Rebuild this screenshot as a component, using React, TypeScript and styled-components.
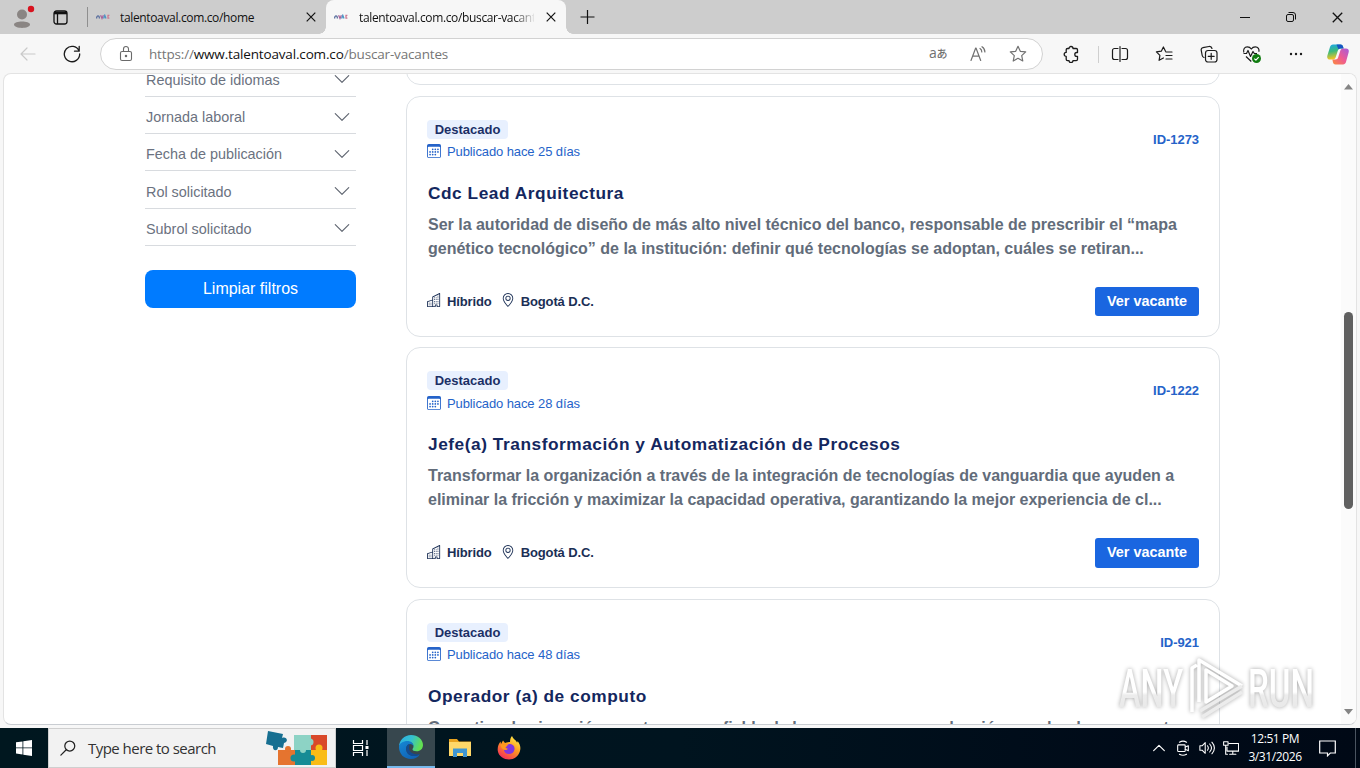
import React from "react";
import styled, { createGlobalStyle } from "styled-components";
import { BsBuildings, BsCalendar3, BsChevronDown, BsGeoAlt } from "react-icons/bs";

const GlobalStyle = createGlobalStyle`
  * {
    box-sizing: border-box;
  }
  body {
    margin: 0;
    overflow: hidden;
    font-family: "Liberation Sans", Arial, sans-serif;
  }
`;

const Desktop = styled.div`
  display: flex;
  flex-direction: column;
  width: 1360px;
  height: 768px;
  background: #f7f7f7;
  overflow: hidden;
`;

const TabBar = styled.div`
  display: flex;
  align-items: center;
  height: 34px;
  background: #cdcdcd;
  font-family: "Open Sans", sans-serif;
  font-size: 12px;
  color: #111;
  svg {
    display: block;
    flex: none;
  }
  .profile {
    margin-left: 12px;
  }
  .workspaces {
    margin-left: 18px;
  }
  .divider {
    width: 1px;
    height: 20px;
    margin-left: 19px;
    background: #8f8f8f;
  }
`;

const Tab = styled.div<{ $active?: boolean; $width: number }>`
  position: relative;
  display: flex;
  align-items: center;
  width: ${(p) => p.$width}px;
  height: 34px;
  padding: 0 10px 0 8px;
  border-radius: 8px 8px 0 0;
  background: ${(p) => (p.$active ? "#f7f7f7" : "transparent")};
  &::before,
  &::after {
    content: "";
    display: ${(p) => (p.$active ? "block" : "none")};
    position: absolute;
    bottom: 0;
    width: 7px;
    height: 7px;
  }
  &::before {
    left: -7px;
    background: radial-gradient(circle at 0 0, #cdcdcd 6.5px, #f7f7f7 7px);
  }
  &::after {
    right: -7px;
    background: radial-gradient(circle at 100% 0, #cdcdcd 6.5px, #f7f7f7 7px);
  }
`;

const TabTitle = styled.span<{ $fade?: boolean }>`
  flex: 1;
  margin-left: 10px;
  margin-right: 14px;
  overflow: hidden;
  white-space: nowrap;
  letter-spacing: -0.35px;
  ${(p) =>
    p.$fade &&
    "mask-image: linear-gradient(90deg, #000 88%, transparent 101%); margin-left: 11px; margin-right: 12px;"}
`;

const WindowButtons = styled.div`
  display: flex;
  margin-left: auto;
  div {
    display: flex;
    justify-content: center;
    width: 46px;
  }
`;

const Toolbar = styled.div`
  display: flex;
  align-items: center;
  height: 40px;
  padding-left: 6px;
  svg {
    display: block;
  }
`;

const ToolButton = styled.div<{ $width?: number }>`
  display: flex;
  justify-content: center;
  width: ${(p) => p.$width || 44}px;
`;

const Omnibox = styled.div`
  display: flex;
  align-items: center;
  width: 943px;
  height: 32px;
  margin: 0 6px;
  padding: 0 4px 0 17px;
  border: 1px solid #d2d2d2;
  border-radius: 16px;
  background: #fff;
`;

const Url = styled.div`
  flex: 1;
  margin-left: 15px;
  font: 13.5px "Open Sans", sans-serif;
  letter-spacing: -0.16px;
  color: #767676;
  b {
    font-weight: 400;
    color: #111;
  }
`;

const Translate = styled.span`
  height: 20px;
  margin-top: -2px;
  font: 14px "Open Sans", "Noto Sans CJK JP", sans-serif;
  line-height: 20px;
  color: #717171;
  letter-spacing: -0.5px;
  small {
    font: 500 11px "Noto Sans CJK JP", sans-serif;
    line-height: 16px;
  }
`;

const Separator = styled.div`
  width: 1px;
  height: 17px;
  margin-left: 5px;
  background: #cfcfcf;
`;

const Viewport = styled.div`
  position: relative;
  display: flex;
  width: 1354px;
  height: 652px;
  margin: -1px 0 0 3px;
  border: 1px solid #e3e3e3;
  border-bottom-color: #c9cdd2;
  border-radius: 8px;
  background: #fff;
  overflow: hidden;
`;

const Filters = styled.div`
  width: 211px;
  margin-left: 141px;
  margin-top: -14.3px;
`;

const FilterRow = styled.div`
  display: flex;
  align-items: center;
  justify-content: space-between;
  height: 37.25px;
  padding: 4px 5px 0 1px;
  border-bottom: 1px solid #d8dbdf;
  color: #6b7280;
  font-size: 14.4px;
  svg {
    color: #5f6570;
    width: 18px;
    height: 18px;
    margin-top: -1px;
  }
`;

const ClearButton = styled.button`
  display: block;
  width: 211px;
  height: 38px;
  margin-top: 24px;
  border: 0;
  border-radius: 8px;
  background: #007bff;
  color: #fff;
  font: 16px "Liberation Sans", sans-serif;
`;

const Results = styled.div`
  display: flex;
  flex-direction: column;
  gap: 10.5px;
  width: 814px;
  margin-left: 50px;
  margin-top: -229.7px;
`;

const Card = styled.div`
  flex: none;
  height: 241px;
  padding: 23px 20px 0;
  border: 1px solid #dee2e6;
  border-radius: 14px;
  background: #fff;
`;

const CardHeader = styled.div`
  display: flex;
  align-items: flex-start;
  justify-content: space-between;
  height: 41px;
`;

const Badge = styled.div`
  width: 81px;
  height: 19px;
  border-radius: 4px;
  background: #e8f0fe;
  color: #1b2f66;
  font-size: 13px;
  font-weight: 700;
  line-height: 19px;
  text-align: center;
`;

const Published = styled.div`
  display: flex;
  align-items: center;
  height: 22px;
  margin-top: 2px;
  color: #2563c9;
  font-size: 13px;
  letter-spacing: -0.1px;
  svg {
    width: 14px;
    height: 14px;
    margin-right: 6px;
    margin-top: -1px;
  }
`;

const VacancyId = styled.div`
  margin-top: 12px;
  color: #2563c9;
  font-size: 13px;
  font-weight: 700;
  letter-spacing: -0.05px;
`;

const VacancyTitle = styled.h3`
  margin: 20px 0 0 1px;
  color: #14275e;
  font-size: 17.3px;
  font-weight: 700;
  line-height: 24px;
  letter-spacing: 0.54px;
`;

const Description = styled.p`
  height: 48px;
  margin: 8px 0 0 1px;
  color: #626c7a;
  font-size: 16px;
  font-weight: 700;
  line-height: 24px;
  letter-spacing: -0.008px;
  white-space: nowrap;
`;

const CardFooter = styled.div`
  display: flex;
  align-items: center;
  height: 30px;
  margin-top: 25.5px;
  color: #1b2f55;
  font-size: 13px;
  font-weight: 700;
  letter-spacing: -0.12px;
  svg {
    width: 14px;
    height: 14px;
    margin-right: 6px;
    margin-top: -2px;
  }
  span {
    margin-right: 9px;
  }
`;

const ViewButton = styled.button`
  width: 104px;
  height: 29.5px;
  margin-left: auto;
  padding: 0 0 1px;
  border: 0;
  border-radius: 3px;
  background: #1a66e0;
  color: #fff;
  font: 700 14.4px "Liberation Sans", sans-serif;
`;

const Scrollbar = styled.div`
  display: flex;
  flex-direction: column;
  align-items: center;
  width: 15px;
  margin-left: auto;
  padding: 10px 0 9px;
  background: #fbfbfb;
  svg {
    flex: none;
  }
  div {
    width: 9px;
    height: 197px;
    margin-top: 222px;
    margin-bottom: auto;
    border-radius: 5px;
    background: #606060;
  }
`;

const Watermark = styled.div`
  position: absolute;
  left: 1114px;
  top: 582px;
  display: flex;
  align-items: center;
  width: 202px;
  height: 66px;
  filter: drop-shadow(0 0 2px rgba(0, 0, 0, 0.35));
  text {
    font: 500 53px Roboto, sans-serif;
    fill: url(#wmFade);
  }
`;

const Taskbar = styled.div`
  display: flex;
  align-items: center;
  height: 40px;
  margin-top: auto;
  background: linear-gradient(90deg, #00171f 0%, #00141f 50%, #000a18 85%, #000916 100%);
  svg {
    display: block;
    flex: none;
  }
`;

const TaskButton = styled.div<{ $active?: boolean; $width?: number }>`
  display: flex;
  align-items: center;
  justify-content: center;
  width: ${(p) => p.$width || 49}px;
  height: 40px;
  background: ${(p) => (p.$active ? "#37474e" : "transparent")};
  border-bottom: ${(p) => (p.$active ? "2px solid #76b9ed" : "0")};
`;

const SearchBox = styled.div`
  display: flex;
  align-items: center;
  width: 288px;
  height: 40px;
  padding-left: 11px;
  border: 1px solid #cfcfcf;
  background: #f2f2f2;
  font: 15px "Open Sans", sans-serif;
  letter-spacing: -0.53px;
  color: #333;
  span {
    width: 177px;
    margin-left: 12px;
  }
`;

const Tray = styled.div`
  display: flex;
  align-items: center;
  height: 40px;
  margin-left: auto;
  > svg {
    margin-right: 8px;
  }
  .desktop-edge {
    width: 1px;
    height: 40px;
    margin: 0 4px 0 11px;
    background: #4a5460;
  }
`;

const Clock = styled.div`
  width: 60px;
  margin-left: -2px;
  margin-right: 14px;
  color: #fff;
  font: 12px "Open Sans", sans-serif;
  line-height: 18px;
  letter-spacing: -0.4px;
  text-align: center;
  white-space: nowrap;
`;

const Line = ({ size = 18, color = "#1b1b1b", width = 1.2, children }: any) => (
  <svg
    width={size}
    height={size}
    viewBox="0 0 18 18"
    fill="none"
    stroke={color}
    strokeWidth={width}
    strokeLinecap="round"
    strokeLinejoin="round"
  >
    {children}
  </svg>
);

const AvalMark = () => (
  <svg width="14" height="6" viewBox="0 0 14 6" fill="none" strokeWidth="1.3">
    <path d="M.6 4.600C.6 1 3.400 1 3.400 4.600" stroke="#5a6f9e" />
    <path d="M4.600 1.200 6 4.400 7.400 1.200" stroke="#a8629a" />
    <path d="M7.600 4.600 8.800 1.400 10 4.600" stroke="#4d94c4" />
    <path d="M13.400 1.400h-1.400v2.800h1.400" stroke="#cc7a92" />
  </svg>
);

const CloseMark = ({ size = 10 }: { size?: number }) => (
  <svg width={size} height={size} viewBox="0 0 10 10" stroke="#111" strokeWidth="1.2">
    <path d="M.7.7l8.6 8.6M9.3.7L.7 9.3" />
  </svg>
);

const filters = [
  "Requisito de idiomas",
  "Jornada laboral",
  "Fecha de publicación",
  "Rol solicitado",
  "Subrol solicitado",
];

const vacancies = [
  {
    id: "ID-1273",
    days: 25,
    title: "Cdc Lead Arquitectura",
    lines: [
      "Ser la autoridad de diseño de más alto nivel técnico del banco, responsable de prescribir el “mapa",
      "genético tecnológico” de la institución: definir qué tecnologías se adoptan, cuáles se retiran...",
    ],
  },
  {
    id: "ID-1222",
    days: 28,
    title: "Jefe(a) Transformación y Automatización de Procesos",
    lines: [
      "Transformar la organización a través de la integración de tecnologías de vanguardia que ayuden a",
      "eliminar la fricción y maximizar la capacidad operativa, garantizando la mejor experiencia de cl...",
    ],
  },
  {
    id: "ID-921",
    days: 48,
    title: "Operador (a) de computo",
    lines: ["Garantizar la ejecución oportuna y confiable de los procesos en producción, cuadre de sus puestos"],
  },
];

const BrowserTabs = () => (
  <TabBar>
    <svg className="profile" width="23" height="24" viewBox="0 0 23 24">
      <circle cx="10" cy="9.5" r="5" fill="#8a8583" />
      <path d="M2 19.5c0-4 16-4 16 0 0 4.500-16 4.500-16 0z" fill="#8a8583" />
      <circle cx="19" cy="4" r="3.2" fill="#d8131f" />
    </svg>
    <svg className="workspaces" width="15" height="15" viewBox="0 0 15 15" fill="none" stroke="#111" strokeWidth="1.3">
      <rect x="1" y="1" width="13" height="13" rx="2.500" />
      <path d="M1 3h13" strokeWidth="2.600" />
      <path d="M4.500 3v11" />
    </svg>
    <div className="divider" />
    <Tab $width={238}>
      <AvalMark />
      <TabTitle>talentoaval.com.co/home</TabTitle>
      <CloseMark />
    </Tab>
    <Tab $width={240} $active>
      <AvalMark />
      <TabTitle $fade>talentoaval.com.co/buscar-vacantes</TabTitle>
      <CloseMark />
    </Tab>
    <svg width="42" height="14" viewBox="0 0 42 14" stroke="#111" strokeWidth="1.2">
      <path d="M14.500 7h14M21.500 0v14" />
    </svg>
    <WindowButtons>
      <div>
        <svg width="10" height="10" viewBox="0 0 10 10" stroke="#111">
          <path d="M0 5.500h10" />
        </svg>
      </div>
      <div>
        <svg width="10" height="10" viewBox="0 0 10 10" fill="none" stroke="#111">
          <rect x=".5" y="2.500" width="7" height="7" rx="1.500" />
          <path d="M2.500.5H7A2.500 2.500 0 0 1 9.500 3v4.500" />
        </svg>
      </div>
      <div>
        <CloseMark size={11} />
      </div>
    </WindowButtons>
  </TabBar>
);

const AddressBar = () => (
  <Toolbar>
    <ToolButton>
      <Line color="#c9c9c9">
        <path d="M16 9H2M8 3L2 9l6 6" />
      </Line>
    </ToolButton>
    <ToolButton>
      <Line width={1.3}>
        <path d="M16 5.800A7.700 7.700 0 1 0 16.700 9M16.200 1.500v4.700h-4.700" />
      </Line>
    </ToolButton>
    <Omnibox>
      <svg width="16" height="18" viewBox="0 0 16 18" fill="none" stroke="#6a6a6a" strokeWidth="1.1">
        <rect x="2.500" y="6.500" width="11" height="9" rx="1.600" />
        <path d="M5.500 6.500V4a2.500 2.500 0 0 1 5 0v2.500" />
        <circle cx="8" cy="11" r=".7" fill="#6a6a6a" />
      </svg>
      <Url>
        https://<b>www.talentoaval.com.co</b>/buscar-vacantes
      </Url>
      <ToolButton $width={40}>
        <Translate>
          a<small>あ</small>
        </Translate>
      </ToolButton>
      <ToolButton $width={40}>
        <Line color="#717171">
          <path d="M2 15.500L6.700 3h.3l4.700 12.500M3.600 11.200h6.500M11 3.500c1.200.7 1.800 2 1.800 3.500M13 1.700c1.900 1.200 2.900 3 2.900 5.300" />
        </Line>
      </ToolButton>
      <ToolButton $width={40}>
        <Line color="#717171">
          <path d="M9 1.300l2.300 5 5.400.6-4 3.700 1.100 5.400L9 13.300 4.200 16l1.100-5.400-4-3.700 5.400-.6z" />
        </Line>
      </ToolButton>
    </Omnibox>
    <ToolButton>
      <Line width={1.3}>
        <path d="M7 3.500a2 2 0 0 1 4 0h3.200a1.300 1.300 0 0 1 1.300 1.300V7.500h-.8a1.900 1.900 0 0 0 0 3.800h.8v3a1.300 1.300 0 0 1-1.300 1.300H11a2 2 0 0 1-4 0H5.500a1.300 1.300 0 0 1-1.300-1.300v-2.900a2 2 0 0 1 0-4V4.800a1.300 1.300 0 0 1 1.300-1.300z" />
      </Line>
    </ToolButton>
    <Separator />
    <ToolButton $width={42}>
      <Line>
        <path d="M7 3.500H3.500a2 2 0 0 0-2 2v7a2 2 0 0 0 2 2H7M11 3.500h3.500a2 2 0 0 1 2 2v7a2 2 0 0 1-2 2H11M9 1.500v15" />
      </Line>
    </ToolButton>
    <ToolButton $width={46}>
      <Line>
        <path d="M10.500 6.200L8.400 2 6.300 6.200l-4.900.7 3.500 3.500-.8 4.900L8.400 13M11 7h6M11 10.500h6M11 14h6" />
      </Line>
    </ToolButton>
    <ToolButton $width={43}>
      <Line>
        <path d="M4 12.500c-1-.3-1.600-1-1.800-2L1.200 5.200c-.2-1.200.5-2.300 1.700-2.500L9 1.500c1.500-.2 2.600.3 3 2" />
        <rect x="5.500" y="5.500" width="11.500" height="11.500" rx="2.500" />
        <path d="M11.200 8.300v6M8.200 11.300h6" />
      </Line>
    </ToolButton>
    <ToolButton>
      <svg width="20" height="20" viewBox="0 0 20 20" fill="none" stroke="#1b1b1b" strokeWidth="1.200" strokeLinejoin="round">
        <path d="M1.800 8.500c-.8-3 .7-5.700 3.500-5.700 2 0 3.200 1 4 2.200.8-1.200 2-2.200 4-2.200 2.800 0 4.300 2.700 3.500 5M4 12.500l5.300 5M1.500 9.500h3l1.500-3 2.500 6L11 7.500l1.300 2H15" />
        <circle cx="14.500" cy="14.500" r="4.500" fill="#107c10" stroke="none" />
        <path d="M12.300 14.600l1.600 1.500 2.800-2.900" stroke="#fff" />
      </svg>
    </ToolButton>
    <ToolButton>
      <svg width="14" height="4" viewBox="0 0 14 4" fill="#1b1b1b">
        <circle cx="2" cy="2" r="1.200" />
        <circle cx="7" cy="2" r="1.200" />
        <circle cx="12" cy="2" r="1.200" />
      </svg>
    </ToolButton>
    <ToolButton $width={40}>
      <svg width="22" height="21" viewBox="0 0 22 21">
        <defs>
          <linearGradient id="coA" x1="0" y1="0" x2=".2" y2="1">
            <stop offset="0" stopColor="#1aa7ec" />
            <stop offset=".5" stopColor="#3dbb7a" />
            <stop offset="1" stopColor="#f7c522" />
          </linearGradient>
          <linearGradient id="coB" x1="1" y1="0" x2="0" y2="1">
            <stop offset="0" stopColor="#a45bdc" />
            <stop offset=".5" stopColor="#ee5a94" />
            <stop offset="1" stopColor="#fb8a3c" />
          </linearGradient>
        </defs>
        <path d="M6 .5h7.500c1.500 0 2 .8 2.500 2l.6 2h-3c-1.600 0-2.300.7-2.800 2.200l-2 6.300c-.5 1.600-1.200 2.500-3 2.500H3C.5 15.500-.2 13.800.4 11.500L3 3C3.500 1.400 4.400.5 6 .5z" fill="url(#coA)" />
        <path d="M9.500.5h4c1.500 0 2 .8 2.500 2l.6 2h-3c-1 0-1.600.3-2.100.9z" fill="#1754c4" />
        <path d="M16 20.500H8.500c-1.500 0-2-.8-2.500-2l-.6-3h3c1.600 0 2.300-.7 2.800-2.200l2-6.300c.5-1.600 1.200-2.500 3-2.500H19c2.500 0 3.200 1.700 2.600 4L19 18c-.5 1.600-1.400 2.500-3 2.500z" fill="url(#coB)" />
      </svg>
    </ToolButton>
  </Toolbar>
);

const StartTaskbar = () => (
  <Taskbar>
    <TaskButton $width={48}>
      <svg width="16" height="16" viewBox="0 0 16 16" fill="#fff">
        <path d="M0 2.300l6.500-.9v6.100H0zM7.300 1.300L16 0v7.500H7.300zM0 8.300h6.500v6.200L0 13.600zM7.300 8.300H16V16l-8.700-1.300z" />
      </svg>
    </TaskButton>
    <SearchBox>
      <Line size={16} color="#222" width={1.4}>
        <circle cx="11" cy="6.800" r="5.600" />
        <path d="M7 11L1 17" />
      </Line>
      <span>Type here to search</span>
      <svg width="64" height="36" viewBox="0 0 64 36">
        <path d="M29 5h17v15H29z" fill="#8dd3c5" />
        <path d="M46 5h16v15H46z" fill="#d9492a" />
        <path d="M13 20h17v15H13z" fill="#e5742f" />
        <path d="M30 20h16v15H30z" fill="#168b95" />
        <path d="M46 20h16v15H46z" fill="#f9bc16" />
        <circle cx="45" cy="12" r="3.500" fill="#8dd3c5" />
        <circle cx="29" cy="28" r="3.500" fill="#168b95" />
        <circle cx="47" cy="28" r="3" fill="#168b95" />
        <circle cx="38" cy="20" r="3" fill="#8dd3c5" />
        <circle cx="54" cy="18" r="3.500" fill="#f9bc16" />
        <path d="M3 1l15 3-1 4c5-2 7 4 2 5l-1 5-5-1c0 5-6 4-5-1l-7-2z" fill="#176f91" />
        <circle cx="23" cy="19" r="3" fill="#e5742f" />
      </svg>
    </SearchBox>
    <TaskButton>
      <svg width="18" height="18" viewBox="0 0 18 18" fill="none" stroke="#fff" strokeWidth="1.200">
        <path d="M1.500 1v3.500h9V1M1.500 17v-3.500h9V17M1.500 6.500h9v5h-9zM15 1v5M15 11v6" />
        <path d="M13.500 7h3v3h-3z" fill="#fff" stroke="none" />
      </svg>
    </TaskButton>
    <TaskButton $width={2} />
    <TaskButton $width={48} $active>
      <svg width="24" height="24" viewBox="0 0 24 24">
        <defs>
          <linearGradient id="edA" x1="0" y1="0" x2="1" y2=".3">
            <stop offset="0" stopColor="#2baee5" />
            <stop offset=".55" stopColor="#35c1cf" />
            <stop offset="1" stopColor="#62df52" />
          </linearGradient>
          <linearGradient id="edB" x1="0" y1="0" x2=".7" y2="1">
            <stop offset="0" stopColor="#1687d4" />
            <stop offset="1" stopColor="#0f62b5" />
          </linearGradient>
        </defs>
        <path d="M0 12C0 5 5.500 0 12 0c7 0 12 4.800 12 10 0 3.800-2.800 6.300-6.300 6.300-2.900 0-4.200-1-4.200-2 0-.7 1-1.200 1-3C14.500 8.500 12 7 9 7 4 7 0 9.500 0 12z" fill="url(#edA)" />
        <path d="M0 12c0-3.500 4-6 8.500-6 3.500 0 6 2.300 6 5-.8-1.300-2-2-3.400-2C8.500 9 7.200 11.400 7.200 14c0 5 4.600 7.600 9 7 2-.3 3.500-1 4.800-2-2 3.200-5 5-9 5-7 0-12-5-12-12z" fill="url(#edB)" />
        <path d="M11 9c-3 .3-3.800 2.500-3.800 5 0 5 4.600 7.600 9 7 2-.3 3.500-1 4.800-2-6 1.500-11-2-11-6 0-1.800.2-3 1-4z" fill="#124b92" />
      </svg>
    </TaskButton>
    <TaskButton>
      <svg width="22" height="20" viewBox="0 0 22 20">
        <path d="M0 1h8l2 2.500h12V18H0z" fill="#e9a31e" />
        <path d="M0 4h22v14H0z" fill="#ffd869" />
        <path d="M4 10.500h14V19h-4v-4H8v4H4z" fill="#3f96d2" />
        <path d="M8 15h6v3H8z" fill="#ffd869" />
      </svg>
    </TaskButton>
    <TaskButton>
      <svg width="24" height="24" viewBox="0 0 24 24">
        <defs>
          <linearGradient id="fx" x1=".8" y1="0" x2=".2" y2="1">
            <stop offset="0" stopColor="#fff04a" />
            <stop offset=".45" stopColor="#ff9a1f" />
            <stop offset="1" stopColor="#f4245e" />
          </linearGradient>
        </defs>
        <path d="M15 0c1 3 4 4 5 6.500.6-.3.700-1 .6-1.500C23 8 24 11 23 15c-1.300 5-6 8.500-11 8.500S1.800 20.500.8 15C.3 11 1.500 8 3.500 5.500L4 8l2-3.500L8 7c2-1 4-.8 5-1 0-2 .5-4.500 2-6z" fill="url(#fx)" />
        <path d="M12 8c4 0 6 2.500 5.500 5.500-.5 3-3 4.500-5.500 4.500-3.500 0-5.500-2.500-5-5 1.500 1 3 .8 4-.2-1-.5-2.500-.8-3-2C9 9.800 10.200 9 12 8z" fill="#8036df" />
        <path d="M3.500 8.500C6 7.500 8 9 10.500 9.300c.5.700-1.500 1.200-2 2-.5 1 .5 1.500 2 1.900C7.500 15 4 13.500 3.500 8.500z" fill="#ff9a1f" />
      </svg>
    </TaskButton>
    <Tray>
      <Line size={16} color="#fff" width={1.300}>
        <path d="M3 12l6-6 6 6" />
      </Line>
      <Line size={16} color="#fff">
        <rect x="3" y="5.500" width="8.500" height="7.500" rx="1" />
        <path d="M11.500 8l3.500-1.500V12l-3.500-1.500M5 2.500c2.500-1.500 5.500-1.500 8 0M5 16c2.500 1.500 5.500 1.500 8 0" />
      </Line>
      <Line size={16} color="#fff">
        <path d="M1 6.500h2.500L7 3v12l-3.500-3.500H1zM9.500 6.500c1.200 1.500 1.200 3.500 0 5M12 4.500c2.500 2.700 2.500 6.300 0 9M14.500 2.500c3.500 4 3.500 9 0 13" />
      </Line>
      <Line size={16} color="#fff">
        <path d="M7 4h10.500v8.500H4.500V8M11 12.500V16M7.500 16h7M.7 2h5v4h-5zM3 6v10h2" />
      </Line>
      <Clock>
        <div>12:51 PM</div>
        <div>3/31/2026</div>
      </Clock>
      <svg width="17" height="17" viewBox="0 0 17 17" fill="none" stroke="#fff" strokeWidth="1.200">
        <path d="M.7 1h15.600v12h-5L8.500 15.800V13H.7z" />
      </svg>
      <div className="desktop-edge" />
    </Tray>
  </Taskbar>
);

const App = () => (
  <>
    <GlobalStyle />
    <Desktop>
      <BrowserTabs />
      <AddressBar />
      <Viewport>
        <Filters>
          {filters.map((name) => (
            <FilterRow key={name}>
              {name}
              <BsChevronDown />
            </FilterRow>
          ))}
          <ClearButton>Limpiar filtros</ClearButton>
        </Filters>
        <Results>
          <Card />
          {vacancies.map((v) => (
            <Card key={v.id}>
              <CardHeader>
                <div>
                  <Badge>Destacado</Badge>
                  <Published>
                    <BsCalendar3 />
                    Publicado hace {v.days} días
                  </Published>
                </div>
                <VacancyId>{v.id}</VacancyId>
              </CardHeader>
              <VacancyTitle>{v.title}</VacancyTitle>
              <Description>
                {v.lines.map((line) => (
                  <React.Fragment key={line}>
                    {line}
                    <br />
                  </React.Fragment>
                ))}
              </Description>
              {v.lines.length > 1 && (
                <CardFooter>
                  <BsBuildings />
                  <span>Híbrido</span>
                  <BsGeoAlt />
                  Bogotá D.C.
                  <ViewButton>Ver vacante</ViewButton>
                </CardFooter>
              )}
            </Card>
          ))}
        </Results>
        <Scrollbar>
          <svg width="9" height="6" viewBox="0 0 9 6" fill="#858585">
            <path d="M4.500 0L9 5.500H0z" />
          </svg>
          <div />
          <svg width="9" height="6" viewBox="0 0 9 6" fill="#858585">
            <path d="M0 0h9L4.500 5.500z" />
          </svg>
        </Scrollbar>
        <Watermark>
          <svg width="202" height="66" viewBox="0 0 202 66">
            <defs>
              <linearGradient id="wmFade" x1="0" y1="0" x2="0" y2="1">
                <stop offset=".55" stopColor="#fff" />
                <stop offset=".6" stopColor="#ececec" />
                <stop offset="1" stopColor="#e6e6e6" />
              </linearGradient>
            </defs>
            <text x="1" y="51" textLength="64" lengthAdjust="spacingAndGlyphs">ANY</text>
            <text x="130" y="51" textLength="66" lengthAdjust="spacingAndGlyphs">RUN</text>
            <g fill="none" stroke="#fff" strokeWidth="3.500" strokeLinejoin="round">
              <path d="M74 56V12l5-3M81 46V4l43 26" />
              <path d="M88 14v32l26-16z" />
              <path d="M124 30L82 55M124 36L84 61" stroke="#ececec" />
            </g>
          </svg>
        </Watermark>
      </Viewport>
      <StartTaskbar />
    </Desktop>
  </>
);

export default App;
